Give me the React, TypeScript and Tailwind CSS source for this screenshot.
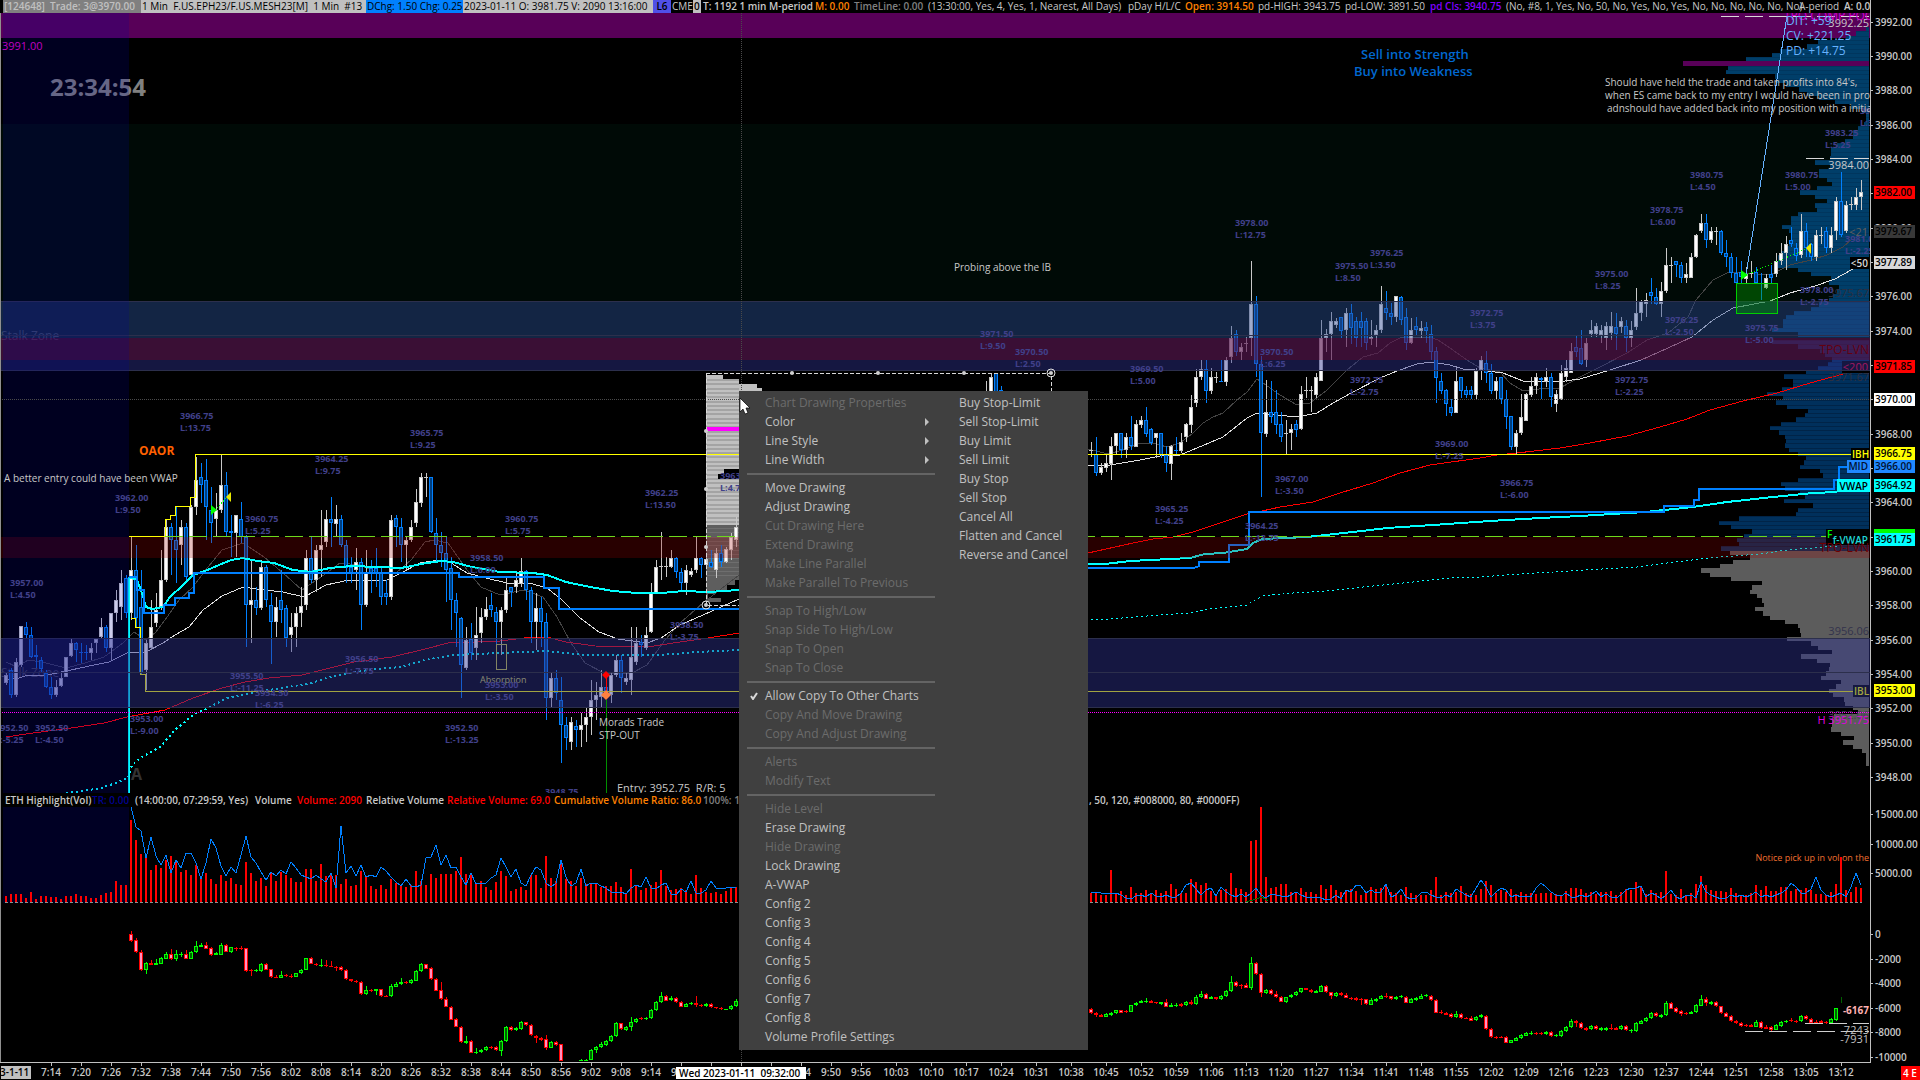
import React from "react";

type Bar = [number, number, number, number, string];
type Pt = [number, number];

const STEP = 5;
const barX = (i: number) => 6 + i * STEP;

/* Bars are "kind high,bodyTop,bodyBottom,low", in thirds of a pixel below the series origin. */
function parseBars(src: string): Bar[] {
  return src
    .trim()
    .split(/\s*;\s*/)
    .filter(Boolean)
    .map((s) => {
      const p = s.trim().split(/[\s,]+/);
      return [Number(p[1]), Number(p[2]), Number(p[3]), Number(p[4]), p[0]] as Bar;
    });
}

const PRICE_A = parseBars(`
w 940,945,968,975;b 925,930,1005,1015;w 895,905,1005,1010;w 798,798,915,920;b 785,800,825,835;b 800,825,890,895;b 855,885,892,925;b 890,900,928,940;b 930,940,980,985;b 950,980,1005,1018;
w 960,980,1005,1010;w 935,955,978,982;w 890,890,950,952;w 838,850,888,890;b 845,850,870,905;b 850,875,878,910;b 855,876,879,900;w 850,865,880,900;w 838,838,850,880;w 775,800,830,835;
b 795,800,865,875;w 760,760,865,900;w 690,720,760,785;w 630,670,740,780;b 645,655,760,775;w 530,630,760,780;b 555,630,775,800;b 630,740,940,945;w 840,850,930,990;w 720,800,865,870;
w 700,750,790,800;w 570,660,745,750;w 480,500,660,665;b 490,500,540,645;b 440,540,570,670;w 480,500,555,615;b 490,500,650,670;w 435,440,645,650;w 290,360,440,465;b 310,350,375,430;
b 298,360,440,540;b 380,450,490,550;w 400,450,478,530;w 285,375,450,460;b 335,375,515,530;b 465,512,518,590;w 465,465,518,590;b 425,478,530,550;b 525,530,735,862;w 600,720,735,850;
b 680,720,745,765;w 600,620,745,750;b 615,620,720,740;b 700,735,785,912;w 710,740,785,830;b 630,720,750,790;b 735,745,835,860;w 760,800,825,875;w 740,760,800,860;w 680,738,760,800;
w 570,595,735,750;b 530,595,660,670;w 555,570,660,695;w 450,555,570,650;w 450,478,545,560;b 410,478,490,560;w 435,478,492,530;b 465,478,555,560;b 540,555,625,670;b 590,620,640,670;
w 565,605,630,690;b 595,605,735,810;w 570,640,735,740;b 600,625,640,700;b 565,625,640,680;b 625,640,710,735;b 660,698,710,735;w 465,480,710,720;b 465,475,500,560;b 475,500,555,605;
w 530,540,555,630;w 480,500,540,545;w 388,425,490,500;w 338,350,430,440;w 338,350,352,410;b 350,350,515,520;b 475,518,555,605;b 515,555,580,620;b 530,580,630,725;b 590,625,720,810;
b 700,720,760,860;b 770,775,915,1015;w 800,840,925,930;b 788,838,880,900;w 740,825,865,900;w 745,770,820,850;w 710,748,770,780;b 700,735,750,770;b 740,755,785,860;w 740,750,785,885;
w 650,690,750,760;b 680,680,695,740;w 635,660,680,700;w 595,632,672,680;b 630,632,690,720;b 680,690,785,850;w 700,745,785,870;b 710,745,785,860;b 760,785,1015,1080;w 940,955,1015,1040;
b 930,955,1000,1020;b 950,1020,1095,1210;b 1070,1095,1135,1170;w 1070,1085,1145,1170;b 1080,1098,1110,1160;w 1060,1095,1110,1160;w 1040,1070,1095,1145;w 960,1020,1070,1125;w 965,1005,1020,1080;w 930,980,1010,1040;
b 940,980,1010,1015;w 940,945,1005,1030;w 885,900,945,950;b 885,900,955,1000;w 935,955,965,975;w 800,890,960,1005;w 800,850,905,915;b 825,845,855,890;w 800,825,865,870;w 670,698,815,820;
w 600,620,698,700;w 515,618,621,660;w 590,618,621,650;w 570,595,620,625;b 590,595,635,655;b 625,635,670,690;w 615,630,670,705;w 625,632,645,650;w 530,595,630,640;b 590,595,615,655;
w 590,597,615,620;b 570,605,620,625;w 565,580,630,655;b 555,580,605,620;w 560,568,605,610;w 520,530,570,600;w 470,500,540,560`);

const PRICE_MID = parseBars(`w 62,93,120,130;w 40,50,120,130;b 38,40,95,120;b 78,90,120,130`);

const PRICE_B = parseBars(`
w 305,330,333,350;b 290,343,398,408;w 368,380,398,405;w 343,370,383,395;w 290,318,373,420;w 280,280,318,345;b 278,280,330,355;w 280,290,330,355;b 228,290,318,330;w 240,252,320,322;
w 228,240,254,265;b 200,240,282,292;b 265,268,308,315;w 280,280,293,355;b 280,280,345,355;b 318,345,370,395;w 315,318,372,420;b 290,330,332,345;w 280,306,332,340;w 250,252,292,305;
w 165,202,254,278;w 88,112,190,200;w 60,88,112,120;b 60,88,152,188;w 85,112,152,162;w 95,110,113,130;b 60,123,125,125;w 50,60,125,138;w -42,-5,50,70;b -30,-18,35,48;
w 8,22,35,60;w -8,10,12,35;w -237,-108,-5,48;b -132,-108,73,110;b 48,73,280,470;w 120,216,282,290;b 123,216,230,250;b 150,216,254,282;b 216,252,292,305;w 240,280,282,342;
w 252,268,280,330;b 240,253,270,290;w 138,162,268,270;w 110,150,153,175;w 138,150,152,215;w 100,112,165,175;w -60,-5,122,122;w -32,-18,-5,35;w -85,-57,-17,60;w -65,-57,-45,-35;
b -70,-68,-28,-5;w -95,-80,-30,20;b -108,-80,-35,12;b -70,-57,-5,20;b -85,-57,-35,20;b -65,-57,10,30;w -60,-8,-2,15;w -45,-30,-15,20;w -162,-108,-30,-20;b -147,-95,-80,-60;
b -110,-80,-70,-45;w -132,-132,-70,-55;b -132,-130,-60,-45;b -95,-70,10,30;w -65,-30,10,12;b -70,-42,-30,-15;w -57,-35,-28,-5;b -55,-40,-28,10;b -45,-17,35,60;b 20,32,113,188;
b 98,123,153,162;b 148,150,192,228;b 178,202,218,228;w 85,123,218,220;b 110,112,152,175;b 138,150,165,175;b 138,150,165,178;w 85,92,165,178;w 48,60,90,120;b 33,70,100,130;
b 72,100,153,162;w 110,123,153,178;b 110,112,178,192;b 150,178,232,268;b 228,228,320,330;w 270,280,320,342;w 162,230,280,285;w 160,162,242,242;w 110,138,165,172;w 98,112,138,162;
b 110,115,120,178;w 85,112,125,140;b 98,112,170,200;w 150,162,192,215;w 75,98,178,180;w 60,85,112,125;w 10,33,100,100;b -15,20,35,50;b -30,23,73,75;w -5,10,60,80;
w -60,-30,-17,-8;w -50,-42,-17,-10;w -45,-30,-15,10;w -55,-42,-5,30;w -85,-42,-20,0;b -80,-40,-17,30;w -70,-57,-40,-20;b -60,-42,-5,35;w -57,-30,-5,20`);

const PRICE_C = parseBars(`
w 863,940,980,990;w 900,903,940,963;w 880,900,912,950;b 833,875,888,912;b 863,890,912,915;w 845,873,912,950;w 743,795,873,880;w 770,795,798,850;b 783,783,795,830;b 785,795,835,850;
w 790,823,835,850;w 760,770,833,835;w 703,706,770,775;w 642,670,693,700;b 642,670,720,743;w 680,693,720,730;w 680,693,695,735;b 690,693,760,765;b 720,758,770,800;b 758,770,818,833;
b 770,818,850,850;b 783,815,830,850;w 800,823,837,850;w 783,818,820,835;b 800,815,850,852;b 820,850,852,900;w 823,835,863,868;b 795,823,835,850;w 758,783,823,830;w 730,758,783,795;
w 708,733,758,810;b 680,720,733,740;b 730,745,768,782;w 642,693,765,775;b 670,693,745,770;b 730,733,770,782;w 690,706,772,782;w 680,705,708,733;b 680,693,745,758;w 680,706,745,758;
w 590,604,693,720;b 515,604,706,710;w 603,616,693,700;w 590,613,616,630;w 565,592,615,630;w 540,577,592,630`);

const DELTA_A = parseBars(`
r 453,462,482,485;r 475,480,517,520;r 510,516,569,572;g 545,549,569,582;r 540,549,554,556;g 537,549,554,556;g 530,534,551,553;g 515,522,536,538;r 507,522,537,540;g 510,522,536,542;
g 515,522,525,530;r 510,522,536,538;g 513,516,536,538;g 483,498,517,519;g 490,495,500,502;r 486,495,506,508;r 501,504,525,527;g 515,520,524,526;g 490,495,524,526;r 492,495,515,517;
g 500,502,515,520;r 500,503,506,513;r 497,503,507,510;r 503,505,572,575;r 568,571,574,588;g 567,571,574,576;g 548,552,574,576;r 549,552,569,571;r 567,568,592,594;r 585,590,593,595;
g 573,585,593,595;r 583,585,588,592;r 583,587,590,595;g 578,580,590,592;g 567,569,580,582;g 533,535,569,571;r 531,534,551,553;r 548,551,556,558;g 537,555,557,560;r 540,555,558,560;
r 543,557,560,562;r 557,560,564,572;r 557,561,571,573;r 568,571,598,600;r 597,598,603,606;r 600,602,606,610;r 603,605,643,645;g 618,630,643,646;r 627,630,634,637;g 626,628,633,645;
r 626,628,649,651;r 645,647,650,652;g 613,618,649,651;g 605,612,620,622;g 594,606,613,615;r 603,606,610,613;g 598,600,610,612;g 570,574,602,604;g 550,552,574,576;r 551,553,566,568;
r 562,564,597,599;r 595,597,632,634;r 605,630,658,660;r 652,656,680,682;r 678,680,719,721;r 714,717,740,742;r 738,740,787,790;g 768,784,788,792;r 781,783,818,820;g 805,815,819,823;
g 806,809,815,818;g 798,800,809,812;r 797,800,803,806;r 798,800,811,813;g 780,783,812,828;g 738,741,784,786;r 738,740,751,753;g 742,745,751,754;g 723,727,748,750;r 725,727,736,738;
r 733,736,766,768;r 765,768,775,789;r 770,775,780,784;r 765,778,803,810;g 783,787,803,805;r 783,786,795,798;r 792,793,843,843;r 900,900,902,902;r 900,900,902,902;r 900,900,902,902;
g 837,839,843,843;g 837,839,843,843;g 807,811,839,841;g 798,800,811,818;g 785,792,802,804;g 780,784,794,797;g 765,769,784,786;g 727,730,769,771;r 728,730,748,750;g 737,741,749,752;
g 711,725,742,754;g 713,717,727,729;r 711,715,718,720;g 711,714,718,720;g 686,690,715,717;g 662,666,691,693;g 636,648,667,669;r 645,648,662,664;g 648,655,661,664;r 651,655,667,669;
r 663,667,680,682;g 670,673,680,682;g 665,669,673,676;r 648,669,676,682;r 672,675,679,681;g 669,672,678,680;r 670,673,682,684;r 680,682,685,687;r 682,684,687,690;g 686,687,689,690;
g 674,677,688,690;g 657,663,677,680`);

const DELTA_B = parseBars(`
r 685,687,700,702;r 697,700,704,710;r 702,704,710,711;g 700,703,710,711;g 695,700,704,708;g 689,691,700,701;r 689,691,698,700;r 690,693,697,700;g 674,676,695,697;g 666,668,676,678;
g 660,664,668,670;g 654,664,666,668;r 660,663,668,670;r 665,667,670,673;g 665,667,671,675;r 657,667,680,682;g 670,676,680,682;g 669,675,678,680;r 670,673,677,680;g 663,667,676,678;
r 660,665,672,675;g 645,652,672,674;g 633,642,652,655;r 640,642,657,658;g 648,652,657,658;r 650,652,658,660;g 645,648,658,660;g 630,633,648,650;g 588,606,634,636;r 603,606,618,620;
r 612,615,618,627;r 608,615,623,625;g 531,550,624,630;r 546,550,583,585;r 580,583,640,651;g 627,630,640,642;r 627,630,642,645;r 633,642,651,653;r 647,650,665,667;g 650,652,665,668;
g 642,644,652,655;g 633,636,644,647;g 623,625,637,640;r 623,625,630,631;r 627,629,637,640;g 630,633,638,640;g 615,618,635,637;r 615,618,637,639;r 635,637,648,657;g 637,640,648,650;
r 637,640,645,648;r 640,644,653,655;r 650,653,657,659;r 652,655,660,663;r 655,657,660,675;r 656,658,673,675;g 655,660,674,676;g 653,656,663,665;g 645,648,656,658;r 640,647,651,654;
r 647,649,657,659;g 648,650,658,660;g 645,648,652,654;r 647,650,668,670;g 655,658,668,670;g 652,655,661,664;g 643,647,656,658;g 641,645,649,651;r 644,647,661,663;r 658,661,698,700;
r 690,696,699,703;r 695,699,704,706;r 698,702,712,714;g 692,702,712,714;r 700,703,714,716;r 710,713,716,718;r 708,714,722,724;g 708,712,720,722;g 702,706,712,714;r 706,708,748,750;
r 745,748,772,774;r 767,771,774,776;r 768,770,773,775;r 769,772,788,790;g 779,781,788,790;g 771,774,782,784;g 763,766,775,777;g 755,758,767,769;g 753,758,761,764;r 756,759,762,764;
r 756,759,762,764;g 753,757,761,764;r 754,757,768,770;g 762,765,768,770;g 750,753,768,770;g 738,741,754,756;g 717,723,741,743;r 720,723,730,740;r 726,729,745,747;r 741,744,750,752;
g 736,739,748,750;r 736,739,747,749;g 740,744,750,752;g 740,744,750,752;r 732,744,748,750;r 740,744,749,751;g 736,739,748,750;r 736,739,751,753;g 748,750,754,758;g 727,730,753,755;
g 720,724,731,733;g 712,715,724,726;g 696,699,715,717;r 697,700,709,711;g 702,705,711,713;g 663,669,706,708;r 667,669,686,688;r 682,685,696,698;r 691,694,701,708;r 695,699,702,704;
g 692,697,701,703;g 673,676,697,699;g 645,657,677,679;r 652,657,670,677;g 662,666,672,674;r 664,667,678,680;r 677,679,700,702;r 696,700,710,712;r 705,708,724,726;r 720,723,729,731;
r 726,729,738,740;r 731,735,738,740;r 732,735,740,742;g 720,726,740,742;r 723,726,745,747;r 735,741,746,748;r 738,741,750,752;g 733,736,749,751;g 723,726,738,740;g 720,722,727,729;
r 714,720,724,727;r 719,722,725,728;g 705,708,724,726;r 706,709,717,719;r 713,716,729,731;r 720,725,729,731;r 720,724,729,731;r 722,725,730,732;g 713,717,730,732;g 683,685,720,722`);

const VOL_A = [
  348, 342, 342, 342, 354, 336, 357, 348, 348, 351, 351, 357, 348, 348, 342, 348, 348, 354, 354, 345, 339, 336, 303, 315, 315,
  120, 180, 222, 228, 270, 255, 264, 240, 228, 240, 276, 270, 285, 255, 294, 279, 297, 312, 285, 303, 294, 312, 315, 246, 279,
  303, 294, 318, 276, 303, 276, 285, 294, 306, 306, 267, 267, 303, 252, 288, 279, 285, 312, 297, 318, 315, 273, 291, 318, 327,
  315, 327, 297, 309, 315, 321, 315, 273, 303, 315, 282, 294, 282, 282, 282, 273, 231, 282, 285, 309, 303, 321, 330, 306, 273,
  288, 333, 327, 321, 330, 285, 285, 324, 228, 294, 303, 243, 297, 303, 318, 294, 312, 309, 312, 321, 318, 318, 306, 321, 342,
  267, 318, 330, 324, 315, 306, 270, 318, 330, 327, 324, 330, 342, 285, 324, 337, 339, 336, 342, 333, 324, 321,
];
const VOL_B = [
  338, 338, 345, 345, 270, 340, 333, 345, 321, 340, 340, 330, 340, 330, 338, 333, 312, 327, 340, 340,
  297, 306, 315, 309, 333, 345, 330, 327, 279, 324, 327, 336, 183, 180, 82, 291, 324, 321, 312, 312,
  336, 336, 324, 336, 336, 342, 315, 327, 315, 330, 336, 333, 327, 333, 345, 340, 321, 327, 324, 315,
  336, 340, 345, 321, 340, 345, 345, 345, 330, 291, 345, 336, 340, 336, 318, 340, 342, 345, 327, 303,
  315, 340, 330, 336, 327, 342, 336, 342, 340, 342, 340, 338, 340, 342, 345, 333, 324, 324, 327, 340,
  336, 342, 336, 336, 333, 345, 336, 327, 330, 306, 318, 342, 330, 340, 336, 273, 342, 345, 327, 345,
  340, 312, 288, 315, 330, 333, 333, 336, 324, 340, 345, 345, 340, 315, 330, 318, 333, 333, 321, 321,
  333, 327, 330, 324, 330, 342, 342, 345, 336, 312, 232, 330, 336, 321, 324,
];
const REL_A = [
  80, 140, 152, 235, 172, 228, 255, 225, 280, 240, 265, 220, 220, 250, 298, 250, 178, 203, 258, 288, 262, 278, 225, 167, 230,
  250, 275, 300, 275, 288, 270, 283, 245, 265, 285, 290, 297, 285, 297, 305, 280, 325, 138, 280, 257, 288, 255, 290, 285, 290,
  262, 273, 290, 305, 318, 297, 318, 320, 315, 233, 230, 195, 255, 225, 265, 260, 290, 315, 280, 312, 308, 308, 295, 285, 235,
  260, 290, 268, 310, 318, 285, 262, 270, 310, 322, 310, 240, 290, 318, 310, 268, 318, 308, 310, 318, 325, 335, 340, 335, 342,
  325, 315, 320, 292, 325, 328, 315, 308, 342, 345, 328, 335, 303, 338, 338, 330, 302, 325, 323, 323, 322, 320,
];
const REL_B = [
  338, 335, 338, 340, 338, 340, 345, 355, 356, 348, 344, 350, 340, 348, 350, 345, 352, 350, 340, 315,
  310, 328, 345, 330, 325, 348, 322, 335, 345, 350, 342, 350, 338, 325, 345, 355, 343, 345, 348, 350,
  345, 336, 345, 350, 352, 350, 355, 360, 358, 345, 358, 330, 335, 316, 318, 338, 330, 340, 335, 313,
  350, 345, 328, 350, 356, 355, 340, 335, 345, 352, 355, 345, 350, 328, 335, 345, 350, 325, 300, 320,
  350, 335, 325, 330, 350, 345, 350, 348, 350, 325, 310, 320, 335, 345, 348, 340, 350, 352, 345, 350,
  345, 332, 350, 342, 350, 355, 345, 330, 325, 325, 318, 350, 338, 345, 358, 345, 330, 350, 356, 345,
  345, 355, 305, 335, 345, 350, 358, 355, 345, 350, 345, 352, 345, 335, 350, 345, 352, 345, 340, 330,
  308, 320, 338, 340, 328, 290, 330, 345, 350, 345, 340, 352, 320, 278, 315,
];

const PROFILE_TOP = [
  3, 13, 23, 51, 62, 89, 97, 123, 186, 141, 143, 94, 93, 83, 70, 62, 50, 34, 18, 7, 3, 3, 5, 11, 16, 16, 24, 32, 38, 38, 39, 54,
  39, 50, 50, 42, 37, 52, 69, 54, 42, 54, 52, 71, 78, 78, 87, 80, 77, 77, 80, 85, 87, 91, 91, 91, 71, 58, 38, 40, 30, 32, 36,
  40, 50, 58, 75, 83, 86, 86, 97, 71,
];
const PROFILE_MID = [
  97, 71, 49, 44, 37, 41, 51, 63, 85, 76, 76, 87, 102, 86, 93, 82, 61, 64, 73, 88, 99, 90, 84, 83, 84, 80, 71, 63, 65, 69, 49, 46,
  71, 88, 84, 69, 64, 85, 56, 71, 73, 130, 150, 138, 117, 125, 132, 130, 148,
];
const PROFILE_LOW = [
  139, 119, 136, 149, 168, 159, 138, 107, 117, 119, 112, 107, 105, 114, 106, 99, 84, 71, 69, 68, 82, 58, 51, 37, 68, 52, 39, 40, 43,
  48, 28, 33, 40, 36, 25, 24, 16, 11, 35, 37, 37, 38, 28, 15, 26, 16, 7, 3, 3, 3,
];

const FILL: Record<string, [string, string]> = {
  w: ["#c8c8c8", "#ffffff"],
  b: ["#0080ff", "#003f80"],
  r: ["#ff0000", "#ff90c0"],
  g: ["#00ff00", "#006000"],
};

function Candles({ bars, start, origin }: { bars: Bar[]; start: number; origin: number }) {
  return (
    <g shapeRendering="crispEdges">
      {bars.map(([h, t, b, l, k], n) => {
        const x = barX(start + n);
        const Y = (v: number) => Math.round(origin + v / 3);
        const bh = Math.max(1, Y(b) - Y(t));
        return (
          <g key={n}>
            <rect x={x} y={Y(h)} width={1} height={Math.max(1, Y(l) - Y(h))} fill={FILL[k][0]} />
            <rect x={x - 2} y={Y(t)} width={4} height={bh} fill={FILL[k][0]} />
            {bh > 2 && <rect x={x - 1} y={Y(t) + 1} width={2} height={bh - 2} fill={FILL[k][1]} />}
          </g>
        );
      })}
    </g>
  );
}

function Line({ d, color, w = 1, dash }: { d: string; color: string; w?: number; dash?: string }) {
  return <polyline points={d} fill="none" stroke={color} strokeWidth={w} strokeDasharray={dash} shapeRendering="crispEdges" />;
}

function ProfileRows({ rows, top, color, edge }: { rows: number[]; top: number; color: string; edge: string }) {
  return (
    <g shapeRendering="crispEdges">
      {rows.map((w, n) => {
        const y0 = Math.round(top + n * 4.3);
        const y1 = Math.round(top + (n + 1) * 4.3);
        const pink = w === 186;
        return (
          <g key={n}>
            <rect x={1869 - w} y={y0} width={w} height={y1 - y0} fill={pink ? "#580058" : color} />
            {!pink && <rect x={1869 - w} y={y0} width={w} height={1} fill={edge} />}
          </g>
        );
      })}
    </g>
  );
}

const SWINGS: [number, number, string, string][] = [
  [1235, 226, "3978.00", "L:12.75"], [980, 337, "3971.50", "L:9.50"], [1015, 355, "3970.50", "L:2.50"],
  [1335, 269, "3975.50", "L:8.50"], [1370, 256, "3976.25", "L:3.50"], [1470, 316, "3972.75", "L:3.75"],
  [1595, 277, "3975.00", "L:8.25"], [1650, 213, "3978.75", "L:6.00"], [1690, 178, "3980.75", "L:4.50"],
  [1785, 178, "3980.75", "L:5.00"], [1825, 136, "3983.25", "L:5.25"], [1860, 114, "3987.25", "L:3.00"],
  [1665, 323, "3976.25", "L:-2.50"], [1745, 331, "3975.75", "L:-5.00"], [1800, 293, "3978.00", "L:-2.75"],
  [1845, 242, "3981.00", "L:-2.25"], [180, 419, "3966.75", "L:13.75"], [410, 436, "3965.75", "L:9.25"],
  [315, 462, "3964.25", "L:9.75"], [115, 501, "3962.00", "L:9.50"], [245, 522, "3960.75", "L:5.25"],
  [505, 522, "3960.75", "L:5.75"], [645, 496, "3962.25", "L:13.50"], [720, 479, "3963.50", "L:4.75"],
  [470, 561, "3958.50", "L:6.00"], [10, 586, "3957.00", "L:4.50"], [670, 628, "3958.50", "L:-3.75"],
  [345, 662, "3956.50", "L:-7.75"], [230, 679, "3955.50", "L:-11.25"], [255, 696, "3954.50", "L:-6.25"],
  [485, 688, "3953.00", "L:-3.50"], [130, 722, "3953.00", "L:-9.00"], [-5, 731, "3952.50", "L:-5.25"],
  [35, 731, "3952.50", "L:-4.50"], [445, 731, "3952.50", "L:-13.25"], [545, 795, "3948.75", ""],
  [1130, 372, "3969.50", "L:5.00"], [1260, 355, "3970.50", "L:6.25"], [1350, 383, "3972.75", "L:-2.75"],
  [1435, 447, "3969.00", "L:-7.25"], [1275, 482, "3967.00", "L:-3.50"], [1155, 512, "3965.25", "L:-4.25"],
  [1245, 529, "3964.25", "L:-13.75"], [1500, 486, "3966.75", "L:-6.00"], [1615, 383, "3972.75", "L:-2.25"],
];

function PriceChart() {
  return (
    <svg viewBox="0 13 1870 780" preserveAspectRatio="xMaxYMin slice" className="block h-full w-full" role="img" aria-label="Price chart">
      <rect x="0" y="124" width="1870" height="214" fill="#000a06" />
      <rect x="0" y="13" width="1870" height="25" fill="#580058" />
      <text x="50" y="96" fontSize="24" fontWeight="700" fill="#808080">23:34:54</text>
      <text x="1" y="340" fontSize="12" fill="#4a4a4a">Stalk Zone</text>
      <text x="1" y="677" fontSize="12" fill="#4a4a4a">Stalk Zone</text>

      <ProfileRows rows={PROFILE_TOP} top={27} color="#003e69" edge="#00365e" />
      <ProfileRows rows={PROFILE_MID} top={340} color="#00305c" edge="#002448" />
      <ProfileRows rows={PROFILE_LOW} top={551} color="#5c5c5c" edge="#5c5c5c" />

      {/* selected range profile */}
      <g shapeRendering="crispEdges">
        <path d="M706 375H723V379H739V384H757V388H762V392H762V469H724V474H718V479H739V525H706Z" fill="#c0c0c0" />
        {Array.from({ length: 34 }, (_, n) => (
          <rect key={n} x={706} y={379 + Math.round(n * 4.3)} width={33} height={2} fill="#a4a4a4" />
        ))}
        <rect x="724" y="469" width="15" height="5" fill="#000" />
        <rect x="718" y="474" width="21" height="5" fill="#000" />
        <path d="M706 525H739V580H735V585H727V590H715V594H708V598H721V602H706Z" fill="#5e5e5e" />
        {Array.from({ length: 12 }, (_, n) => (
          <rect key={n} x={706} y={528 + Math.round(n * 4.3)} width={33} height={1} fill="#6e6e6e" />
        ))}
        <rect x="706" y="427" width="33" height="4" fill="#ff00ff" />
      </g>

      <g strokeLinejoin="round">
        <Line color="#444444" d="6,662 17,667 28,660 42,662 66,668 85,663 104,657 123,643 134,632 146,640 156,632 165,620 179,600 193,587 208,567 222,550 243,543 264,557 283,573 302,590 321,577 340,563 359,565 378,572 396,573 411,560 425,542 434,540 448,543 467,570 481,587 500,595 524,590 543,597 557,617 571,643 585,663 604,673 632,673 647,665 665,640 680,623 703,603 739,575" />
        <Line color="#444444" d="1088,449 1100,452 1108,454 1123,450 1140,443 1153,443 1167,447 1180,443 1193,433 1203,423 1213,417 1223,413 1237,400 1247,392 1257,379 1263,383 1280,395 1297,405 1310,403 1327,390 1347,370 1363,357 1378,353 1390,343 1402,337 1429,337 1438,340 1450,348 1467,360 1480,368 1500,372 1510,383 1523,391 1547,388 1560,388 1580,377 1600,367 1627,353 1647,340 1668,333 1688,317 1696,300 1713,280 1729,272 1770,275 1790,265 1811,260 1827,255 1843,247 1851,240" />
        <Line color="#e0e0e0" d="6,680 19,678 28,675 47,675 71,670 94,665 109,662 127,653 146,652 163,643 175,635 189,627 203,610 222,596 243,587 264,590 283,592 304,597 326,585 349,580 387,580 401,573 420,563 439,560 448,561 467,573 486,578 507,583 529,583 547,588 562,600 580,618 599,632 618,639 647,643 661,638 680,625 703,615 739,599" />
        <Line color="#e0e0e0" d="1088,465 1110,465 1140,460 1160,456 1180,455 1197,448 1223,437 1247,418 1257,413 1277,415 1297,417 1317,413 1333,403 1353,392 1380,378 1397,371 1417,364 1432,362 1450,365 1463,369 1487,371 1503,373 1523,381 1557,382 1580,379 1610,370 1641,360 1668,348 1692,337 1713,320 1733,308 1770,301 1790,293 1815,286 1835,279 1853,269" />
        <Line color="#ff0000" d="6,737 33,733 71,728 104,723 127,717 165,710 193,698 222,688 245,682 269,678 302,675 330,668 354,662 392,657 425,649 448,643 500,641 524,638 547,637 566,642 595,646 647,647 680,642 708,638 739,633" />
        <Line color="#ff0000" d="1088,553 1133,543 1153,539 1173,537 1193,532 1220,523 1250,513 1262,511 1280,507 1313,502 1340,493 1373,483 1400,473 1430,465 1480,458 1497,455 1517,453 1560,448 1590,443 1627,436 1660,427 1687,419 1710,410 1743,401 1777,393 1810,383 1843,374" />
      </g>

      <Candles bars={PRICE_A} start={0} origin={360} />
      <Candles bars={PRICE_MID} start={196} origin={360} />
      <Candles bars={PRICE_B} start={217} origin={340} />
      <Candles bars={PRICE_C} start={326} origin={0} />

      <Line color="#00ffff" w={2} dash="2 3" d="66,793 83,791 101,788 116,783 128,778 132,765 142,757 160,747 175,730 193,715 208,708 227,698 255,692 283,688 311,683 330,677 368,670 401,667 425,660 453,655 500,653 547,651 585,655 661,655 698,652 739,650" />
      <Line color="#00ffff" w={1} dash="2 3" d="1091,620 1110,619 1147,616 1190,613 1207,609 1247,605 1252,602 1262,596 1293,593 1327,591 1363,587 1413,582 1450,578 1480,577 1507,575 1568,571 1637,567 1667,563 1700,559 1720,557 1760,554 1787,550 1837,546" />
      <Line color="#00ffff" w={2} d="129,793 129,577" />
      <Line color="#ffff00" d="129,536 165,536 165,519 170,519 170,515 175,515 175,506 190,506 190,497 195,497 195,454 1851,454" />
      <Line color="#ffff00" d="131,618 135,618 135,627 140,627 140,674 145,674 145,691 1853,691" />
      <Line color="#00ffff" w={2} d="129,577 137,580 142,593 146,607 152,609 163,607 170,597 182,586 193,575 205,571 219,565 231,560 243,558 257,561 274,563 293,570 311,572 330,568 352,566 378,567 401,568 427,563 441,561 453,562 472,567 500,572 533,573 547,575 566,582 590,587 613,591 637,593 661,593 684,591 708,592 739,590" />
      <Line color="#00ffff" w={2} d="1088,564 1105,564 1130,561 1190,558 1205,554 1223,553 1247,549 1253,543 1262,539 1307,537 1353,532 1387,528 1433,525 1490,521 1540,518 1580,516 1645,512 1693,507 1727,502 1773,497 1813,493 1837,492" />
      <Line color="#0080ff" w={2} d="129,577 137,577 137,590 144,590 144,613 164,613 164,605 175,605 175,598 189,598 189,593 194,593 194,573 459,573 459,577 544,577 544,588 559,588 559,609 739,609" />
      <Line color="#0080ff" w={2} d="1088,568 1194,568 1199,566 1199,562 1229,562 1229,545 1249,545 1249,512 1664,512 1664,506 1694,506 1694,500 1699,500 1699,489 1834,489 1834,480 1839,480 1839,467 1848,467" />

      <g shapeRendering="crispEdges">
        <rect x="1851" y="448" width="18" height="12" fill="#000" />
        <rect x="1853" y="685" width="16" height="12" fill="#000" />
        <rect x="496" y="644" width="10" height="25" fill="none" stroke="#c8c840" />
      </g>
      <text x="1852" y="458" fontSize="10" fontWeight="600" fill="#ffff00">IBH</text>
      <text x="1854" y="695" fontSize="10" fontWeight="600" fill="#ffff00">IBL</text>
      <text x="480" y="683" fontSize="9" fill="#d0d060">Absorption</text>
      <text x="1869" y="297" textAnchor="end" fontSize="11" fill="#303040">3975.67</text>
      <text x="1869" y="381" textAnchor="end" fontSize="11" fill="#303040">3971.67</text>
      <text x="1869" y="719" textAnchor="end" fontSize="11" fill="#404055">3952.06</text>
      <rect x="1842" y="361" width="27" height="12" fill="#000" />
      <text x="1868" y="371" textAnchor="end" fontSize="11" fill="#ff0040">&lt;200</text>

      {/* zones */}
      <rect x="0" y="302" width="1870" height="36" fill="#2a4690" fillOpacity="0.45" />
      <rect x="0" y="338" width="1870" height="32" fill="#2f3390" fillOpacity="0.45" />
      <rect x="0" y="338" width="1870" height="22" fill="#800020" fillOpacity="0.35" />
      <rect x="0" y="638" width="1870" height="69" fill="#2f3390" fillOpacity="0.45" />
      <rect x="0" y="537" width="1870" height="21" fill="#a00000" fillOpacity="0.25" />
      <Line color="#6cd81e" dash="18 6" d="165,536 1830,536" />
      <g shapeRendering="crispEdges" fill="#2c2f4c">
        <rect x="0" y="301" width="1870" height="1" />
        <rect x="0" y="335" width="1870" height="1" />
        <rect x="0" y="370" width="1870" height="1" />
        <rect x="0" y="638" width="1870" height="1" />
        <rect x="0" y="672" width="1870" height="1" />
        <rect x="0" y="707" width="1870" height="1" />
      </g>
      <rect x="3" y="13" width="126" height="780" fill="#0000a0" fillOpacity="0.2" />
      <text x="1869" y="354" textAnchor="end" fontSize="12" fill="#640010">TPO-LVN</text>

      {/* swing labels */}
      <g fontSize="9" fontWeight="700" fill="#40408a">
        {SWINGS.map(([x, y, a, b], n) => (
          <g key={n}>
            <text x={x} y={y}>{a}</text>
            {b && <text x={x} y={y + 12}>{b}</text>}
          </g>
        ))}
      </g>

      {/* crosshair */}
      <g shapeRendering="crispEdges">
        <Line color="#4a4a4a" dash="1 1" d="0,399 1870,399" />
        <Line color="#4a4a4a" dash="1 1" d="741,13 741,793" />
        <Line color="#ff00ff" dash="1 1" d="0,712 1870,712" />
        <rect x="0" y="13" width="1" height="780" fill="#909090" />
      </g>

      {/* range selection */}
      <g shapeRendering="crispEdges" stroke="#d8d8d8" strokeDasharray="4 2" fill="none">
        <path d="M706 373H1051V391" />
        <path d="M706 373V605H739" />
      </g>
      <g fill="#d0d0d0">
        {[792, 878, 964].map((x) => <circle key={x} cx={x} cy="373" r="2" />)}
        {[431, 489, 547].map((y) => <circle key={y} cx="706" cy={y} r="2" />)}
        {([[1051, 373], [706, 605]] as Pt[]).map(([x, y]) => (
          <g key={x}>
            <circle cx={x} cy={y} r="4" fill="none" stroke="#e0e0e0" />
            <circle cx={x} cy={y} r="2" />
          </g>
        ))}
      </g>

      {/* trades */}
      <Line color="#66b2ff" d="1746,275 1787,16" />
      <g shapeRendering="crispEdges">
        <rect x="1736" y="283" width="41" height="30" fill="#00a000" fillOpacity="0.4" stroke="#00d000" />
        <Line color="#d8d8d8" dash="18 6" d="1721,16 1869,16" />
        <Line color="#d8d8d8" dash="18 6" d="1806,158 1869,158" />
      </g>
      <Line color="#00ff00" dash="1 2" d="1746,275 1806,249" />
      <path d="M1741 270L1748 275L1741 280Z" fill="#00ff00" />
      <path d="M1811 243L1806 248L1811 254Z" fill="#e8e800" />
      <Line color="#00ff00" dash="1 2" d="215,510 227,497" />
      <path d="M211 505L217 510L211 515Z" fill="#00ff00" />
      <path d="M231 492L226 497L231 502Z" fill="#e8e800" />
      <Line color="#ff0000" d="606,675 606,695" />
      <Line color="#009000" d="606,700 606,793" />
      <path d="M606 671L610 675L606 679L602 675Z" fill="#ff0000" />
      <path d="M606 690L611 695L606 700L601 695Z" fill="#ff8040" />

      {/* notes */}
      <g fontSize="11" fill="#c8c8c8">
        <text x="1605" y="86" fontSize="10">Should have held the trade and taken profits into 84's,</text>
        <text x="1605" y="99" fontSize="10">when ES came back to my entry I would have been in profit</text>
        <text x="1607" y="112" fontSize="10">adnshould have added back into my position with a initial T</text>
        <text x="4" y="482" fontSize="10">A better entry could have been VWAP</text>
        <text x="954" y="271" fontSize="10">Probing above the IB</text>
        <text x="599" y="726" fontSize="10">Morads Trade</text>
        <text x="599" y="739" fontSize="10">STP-OUT</text>
        <text x="617" y="792" xmlSpace="preserve">Entry: 3952.75  R/R: 5</text>
        <text x="1869" y="27" textAnchor="end">3992.25</text>
        <text x="1869" y="169" textAnchor="end">3984.00</text>
      </g>
      <g fontSize="12" fill="#66b2ff">
        <text x="1784" y="20" fill="#d000d0">TPO COMP POC</text>
        <text x="1786" y="25">DIT: +59</text>
        <text x="1786" y="40">CV: +221.25</text>
        <text x="1786" y="55">PD: +14.75</text>
      </g>
      <g fontSize="13" fontWeight="600" fill="#0068d0">
        <text x="1361" y="59">Sell into Strength</text>
        <text x="1354" y="76">Buy into Weakness</text>
      </g>
      <text x="2" y="50" fontSize="11" fill="#c000c0">3991.00</text>
      <text x="139" y="455" fontSize="12" fontWeight="700" fill="#ff6000">OAOR</text>
      <text x="131" y="780" fontSize="16" fontWeight="700" fill="#333">A</text>
      <text x="1868" y="236" textAnchor="end" fontSize="11" fill="#606060">&lt;21</text>
      <rect x="1850" y="257" width="19" height="12" fill="#000" />
      <text x="1868" y="267" textAnchor="end" fontSize="10" fontWeight="600" fill="#d8d8d8">&lt;50</text>
      <rect x="1847" y="460" width="23" height="13" fill="#2088ff" />
      <text x="1868" y="470" textAnchor="end" fontSize="10" fontWeight="600" fill="#001030">MID</text>
      <rect x="1837" y="479" width="33" height="13" fill="#00ffff" />
      <text x="1868" y="490" textAnchor="end" fontSize="10" fontWeight="600" fill="#000">VWAP</text>
      <rect x="1826" y="529" width="43" height="16" fill="#000" />
      <text x="1827" y="538" fontSize="10" fontWeight="600" fill="#00ff00">F</text>
      <text x="1868" y="544" textAnchor="end" fontSize="10" fontWeight="600" fill="#20d8d8">f-VWAP</text>
      <text x="1869" y="552" textAnchor="end" fontSize="12" fill="#700000">TPO-LVN</text>
      <text x="1869" y="635" textAnchor="end" fontSize="11" fill="#33334c">3956.06</text>
      <text x="1869" y="724" textAnchor="end" fontSize="11" fill="#e000e0">H 3951.75</text>
    </svg>
  );
}

const relPoints = (v: number[], start: number) => v.map((y, n) => `${barX(start + n)},${Math.round(780 + y / 3)}`).join(" ");

function VolumeChart() {
  return (
    <svg viewBox="0 807 1870 97" preserveAspectRatio="xMaxYMax slice" className="block h-full w-full" role="img" aria-label="Volume">
      <g shapeRendering="crispEdges">
        <rect x="3" y="807" width="126" height="96" fill="#000024" />
        {([[VOL_A, 0], [VOL_B, 217]] as [number[], number][]).map(([v, s]) =>
          v.map((t, n) => {
            const y = Math.round(780 + t / 3);
            return <rect key={`${s}-${n}`} x={barX(s + n) - 1} y={y} width={2} height={903 - y} fill="#ff0000" />;
          })
        )}
        <Line color="#909090" dash="3 2" d="5,902 1862,902" />
        <rect x="0" y="807" width="1" height="97" fill="#909090" />
      </g>
      <Line color="#0080ff" d={relPoints(REL_A, 25)} />
      <Line color="#0080ff" d={relPoints(REL_B, 217)} />
      <Line color="#007000" d="1246,902 1256,899 1262,897 1268,901" />
      <text x="1869" y="861" textAnchor="end" fontSize="9" fill="#f07030">Notice pick up in vol on the</text>
    </svg>
  );
}

function DeltaChart() {
  return (
    <svg viewBox="0 904 1870 158" preserveAspectRatio="xMaxYMax slice" className="block h-full w-full" role="img" aria-label="Cumulative delta">
      <rect x="0" y="904" width="1" height="158" fill="#909090" />
      <Candles bars={DELTA_A} start={25} origin={780} />
      <Candles bars={DELTA_B} start={217} origin={780} />
      <g shapeRendering="crispEdges">
        <rect x="1841" y="997" width="1" height="6" fill="#006000" />
        <Line color="#d0d0d0" dash="18 6" d="1805,1023 1869,1023" />
        <Line color="#d0d0d0" dash="18 6" d="1745,1031 1869,1031" />
        <Line color="#444" dash="1 1" d="741,1050 741,1062" />
      </g>
      <text x="1869" y="1014" textAnchor="end" fontSize="10" fontWeight="700" fill="#ffb0b0">-6167</text>
      <text x="1869" y="1034" textAnchor="end" fontSize="11" fill="#c0c0c0">-7243</text>
      <text x="1869" y="1043" textAnchor="end" fontSize="11" fill="#c0c0c0">-7931</text>
    </svg>
  );
}

function Axis({ top, height, labels, tags = [] }: { top: number; height: number; labels: [string, number][]; tags?: [string, number, string, string][] }) {
  return (
    <svg viewBox={`1870 ${top} 50 ${height}`} preserveAspectRatio="xMinYMin slice" className="block h-full w-full">
      <rect x="1870" y={top} width="1" height={height} fill="#c0c0c0" />
      <g fontSize="10" fontWeight="600" fill="#c8c8c8">
        {labels.map(([s, y]) => (
          <g key={s}>
            <rect x="1871" y={Math.round(y)} width="2" height="1" fill="#c0c0c0" />
            <text x="1875" y={Math.round(y) + 4}>{s}</text>
          </g>
        ))}
      </g>
      {tags.map(([s, y, bg, fg]) => (
        <g key={s + y}>
          <rect x="1874" y={y} width="41" height={s ? 13 : 6} fill={bg} />
          <text x="1875" y={y + 10} fontSize="10" fontWeight="600" fill={fg}>{s}</text>
        </g>
      ))}
    </svg>
  );
}

const PRICE_LABELS: [string, number][] = Array.from({ length: 23 }, (_, n) => {
  const p = 3992 - 2 * n;
  return [`${p}.00`, 399.3 + (3970 - p) * 17.17] as [string, number];
});
const PRICE_TAGS: [string, number, string, string][] = [
  ["3982.00", 186, "#ff0000", "#000"], ["3979.67", 225, "#383838", "#000"], ["3977.89", 256, "#d8d8d8", "#000"],
  ["3971.85", 360, "#ff0000", "#000"], ["3970.00", 393, "#ffffff", "#000"], ["3966.75", 447, "#ffff00", "#000"],
  ["3966.00", 460, "#2088ff", "#001030"], ["3964.92", 479, "#00ffff", "#000"], ["", 529, "#00ff00", "#000"],
  ["3961.75", 533, "#00ffff", "#000"], ["3953.00", 684, "#ffff00", "#000"],
];

const clock = (i: number) => {
  const m = 7 * 60 + 5 + i;
  return `${Math.floor(m / 60)}:${String(m % 60).padStart(2, "0")}`;
};
const TIME_TICKS = [
  ...Array.from({ length: 28 }, (_, n) => 9 + 6 * n),
  ...Array.from({ length: 28 }, (_, n) => 178 + 7 * n),
];
/* The date marker lies over the labels of these bars. */
const COVERED = [141, 147, 153];

function TimeAxis() {
  return (
    <svg viewBox="0 1062 1920 18" preserveAspectRatio="xMaxYMin slice" className="block h-full w-full">
      <rect x="0" y="1062" width="1871" height="1" fill="#c0c0c0" />
      <g fontSize="10" fontWeight="600" fill="#c8c8c8" textAnchor="middle">
        {TIME_TICKS.map((i) => (
          <g key={i}>
            <rect x={barX(i)} y="1063" width="1" height="3" fill="#c0c0c0" />
            {!COVERED.includes(i) && <text x={barX(i)} y="1076">{clock(i)}</text>}
          </g>
        ))}
      </g>
      <g fontSize="10" fontWeight="600">
        <rect x="1" y="1066" width="30" height="13" fill="#c0c0c0" />
        <text x="0" y="1076" fill="#000">3-1-11</text>
        <rect x="676" y="1067" width="130" height="12" fill="#fff" />
        <text x="679" y="1077" fill="#000" xmlSpace="preserve">Wed 2023-01-11  09:32:00</text>
        <rect x="1901" y="1066" width="19" height="14" fill="#ff0000" />
        <text x="1903" y="1077" fill="#fff">4 E</text>
      </g>
    </svg>
  );
}

function Seg({ className, children }: { className: string; children: React.ReactNode }) {
  return <span className={`block shrink-0 whitespace-pre ${className}`}>{children}</span>;
}

function Header() {
  return (
    <header className="flex overflow-hidden bg-black pl-[3px] text-[10px] font-semibold leading-[13px] text-[#c8c8c8]">
      <Seg className="w-[138px] bg-[#808080] pl-px text-[#c0c0c0]">[124648]  Trade: 3@3970.00</Seg>
      <Seg className="w-[225px] bg-[#c0c0c0] pl-px font-medium text-black">1 Min  F.US.EPH23/F.US.MESH23[M]  1 Min  #13</Seg>
      <Seg className="w-[97px] bg-[#0080ff] pl-px font-medium text-black">DChg: 1.50 Chg: 0.25</Seg>
      <Seg className="w-[190px] bg-[#c0c0c0] pl-px font-medium text-black">2023-01-11 O: 3981.75 V: 2090 13:16:00</Seg>
      <Seg className="w-[18px] bg-[#5050e8] text-center text-black">L6</Seg>
      <Seg className="w-[22px] pl-px font-medium">CME</Seg>
      <Seg className="w-[8px] bg-[#c0c0c0] pl-px text-black">0</Seg>
      <Seg className="w-[114px] pl-0.5">T: 1192 1 min M-period</Seg>
      <Seg className="w-[39px] text-[#ff8000]">M: 0.00</Seg>
      <Seg className="w-[74px] text-[#808080]">TimeLine: 0.00</Seg>
      <Seg className="w-[200px] font-medium">(13:30:00, Yes, 4, Yes, 1, Nearest, All Days)</Seg>
      <Seg className="w-[57px] font-medium">pDay H/L/C</Seg>
      <Seg className="w-[73px] text-[#ff8000]">Open: 3914.50</Seg>
      <Seg className="w-[87px] font-medium">pd-HIGH: 3943.75</Seg>
      <Seg className="w-[85px] font-medium">pd-LOW: 3891.50</Seg>
      <Seg className="w-[76px] text-[#8000ff]">pd Cls: 3940.75</Seg>
      <Seg className="w-[293px] font-medium">(No, #8, 1, Yes, No, 50, No, Yes, No, Yes, No, No, No, No, No, No)</Seg>
      <Seg className="w-[45px] font-medium">A-period</Seg>
      <Seg className="w-[40px]">A: 0.00</Seg>
    </header>
  );
}

function VolumeHeader() {
  return (
    <div className="flex overflow-hidden border-l border-[#909090] pl-1 text-[10px] font-semibold leading-[14px] text-[#c8c8c8]">
      <Seg className="w-[87px]">ETH Highlight(Vol)</Seg>
      <Seg className="w-[43px] text-[#000090]">TR: 0.00</Seg>
      <Seg className="w-[120px]">(14:00:00, 07:29:59, Yes)</Seg>
      <Seg className="w-[42px]">Volume</Seg>
      <Seg className="w-[69px] text-[#ff0000]">Volume: 2090</Seg>
      <Seg className="w-[81px]">Relative Volume</Seg>
      <Seg className="w-[107px] text-[#ff0000]">Relative Volume: 69.0</Seg>
      <Seg className="w-[149px] text-[#ff8000]">Cumulative Volume Ratio: 86.0</Seg>
      <Seg className="w-[386px] text-[#808080]">100%: 100.0</Seg>
      <Seg className="">, 50, 120, #008000, 80, #0000FF)</Seg>
    </div>
  );
}

type Item = { label: string; off?: boolean; sub?: boolean; checked?: boolean };
const GROUPS: Item[][] = [
  [{ label: "Chart Drawing Properties", off: true }, { label: "Color", sub: true }, { label: "Line Style", sub: true }, { label: "Line Width", sub: true }],
  [
    { label: "Move Drawing" }, { label: "Adjust Drawing" }, { label: "Cut Drawing Here", off: true },
    { label: "Extend Drawing", off: true }, { label: "Make Line Parallel", off: true }, { label: "Make Parallel To Previous", off: true },
  ],
  [{ label: "Snap To High/Low", off: true }, { label: "Snap Side To High/Low", off: true }, { label: "Snap To Open", off: true }, { label: "Snap To Close", off: true }],
  [{ label: "Allow Copy To Other Charts", checked: true }, { label: "Copy And Move Drawing", off: true }, { label: "Copy And Adjust Drawing", off: true }],
  [{ label: "Alerts", off: true }, { label: "Modify Text", off: true }],
  [
    { label: "Hide Level", off: true }, { label: "Erase Drawing" }, { label: "Hide Drawing", off: true }, { label: "Lock Drawing" },
    { label: "A-VWAP" }, { label: "Config 2" }, { label: "Config 3" }, { label: "Config 4" }, { label: "Config 5" },
    { label: "Config 6" }, { label: "Config 7" }, { label: "Config 8" }, { label: "Volume Profile Settings" },
  ],
];
const TRADES = ["Buy Stop-Limit", "Sell Stop-Limit", "Buy Limit", "Sell Limit", "Buy Stop", "Sell Stop", "Cancel All", "Flatten and Cancel", "Reverse and Cancel"];

function MenuButton({ label, off, sub, checked }: Item) {
  return (
    <button
      type="button"
      role="menuitem"
      disabled={off}
      className={`flex h-[19px] w-full items-center text-left ${off ? "text-[#6c6c6c]" : "text-[#c0c0c0]"}`}
    >
      <span className="flex w-[26px] justify-center pl-1">
        {checked && (
          <svg viewBox="0 0 8 8" className="h-2 w-2" aria-hidden="true">
            <path d="M1 4L3 7L7 1" fill="none" stroke="#d8d8d8" strokeWidth="2" />
          </svg>
        )}
      </span>
      <span className="flex-1 whitespace-nowrap">{label}</span>
      {sub && (
        <svg viewBox="0 0 4 8" className="mr-1 h-2 w-1" aria-hidden="true">
          <path d="M0 0L4 4L0 8Z" fill="#c0c0c0" />
        </svg>
      )}
    </button>
  );
}

function ContextMenu() {
  return (
    <div role="menu" className="absolute left-[739px] top-[391px] flex w-[349px] bg-[#404040] pb-1 pt-0.5 text-xs leading-[19px]">
      <div className="w-[194px]">
        {GROUPS.map((g, n) => (
          <React.Fragment key={n}>
            {n > 0 && (
              <div className="flex h-[9px] items-center pl-2">
                <div className="h-0.5 w-[188px] shrink-0 bg-[#646464]" />
              </div>
            )}
            {g.map((it) => <MenuButton key={it.label} {...it} />)}
          </React.Fragment>
        ))}
      </div>
      <div className="flex-1">
        {TRADES.map((t) => <MenuButton key={t} label={t} />)}
      </div>
    </div>
  );
}

export default function App() {
  return (
    <main className="relative grid h-screen w-full grid-cols-[minmax(0,1fr)_50px] grid-rows-[13px_minmax(0,780fr)_14px_minmax(0,97fr)_minmax(0,158fr)_18px] overflow-hidden bg-black font-['Open_Sans',sans-serif]">
      <Header />
      <div className="border-l border-[#c0c0c0]" />
      <PriceChart />
      <Axis top={13} height={780} labels={PRICE_LABELS} tags={PRICE_TAGS} />
      <VolumeHeader />
      <div className="border-l border-[#c0c0c0]" />
      <VolumeChart />
      <Axis top={807} height={97} labels={[["15000.00", 814], ["10000.00", 844], ["5000.00", 873]]} />
      <DeltaChart />
      <Axis top={904} height={158} labels={[["0", 934], ["-2000", 959], ["-4000", 983], ["-6000", 1008], ["-8000", 1032], ["-10000", 1057]]} />
      <div className="col-span-2">
        <TimeAxis />
      </div>
      <ContextMenu />
      <svg viewBox="0 0 12 19" className="absolute left-[739px] top-[397px] h-[19px] w-3" aria-hidden="true">
        <path d="M1 1V15L4 12L6 17L9 16L7 11H11Z" fill="#fff" stroke="#000" strokeWidth="0.7" />
      </svg>
    </main>
  );
}
